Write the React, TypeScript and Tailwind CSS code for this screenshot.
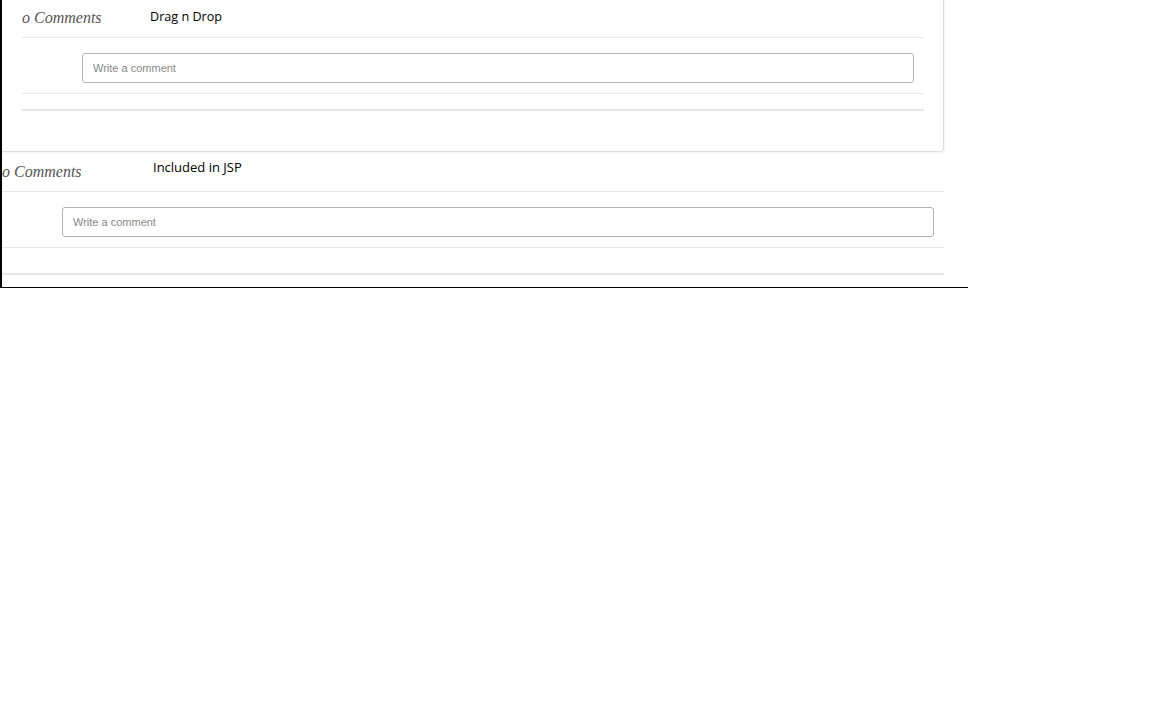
export default function App() {
  return (
    <div className="min-h-screen bg-white">
      <div className="w-[968px] border-l-2 border-b border-black">
        {/* first widget, in a card */}
        <div className="w-[942px] h-[152px] border-r border-b border-[#dcdcdc] rounded-br-[4px] shadow-[1px_1px_1px_rgba(0,0,0,0.04)] pl-5 pr-[19px]">
          <div className="flex items-start h-[37px] pt-[8px]">
            <span className="w-[128px] font-['Liberation_Serif',serif] italic text-[16px] leading-[18px] mt-[1px] text-[#555]">
              o Comments
            </span>
            <span className="mt-[1px] font-['Open_Sans',sans-serif] text-[12.6px] leading-[16px] text-black">
              Drag n Drop
            </span>
          </div>
          <div className="border-t border-[#e8e8e8]" />
          <div className="pl-[60px] pr-[10px] pt-[15px] pb-[10px]">
            <CommentInput />
          </div>
          <div className="border-t border-[#e8e8e8]" />
          <div className="mt-[15px] border-t-2 border-[#e6e6e6]" />
        </div>

        {/* second widget, plain */}
        <div className="w-[942px] pb-[12px]">
          <div className="flex items-start h-[39px] pt-[7px]">
            <span className="w-[151px] font-['Liberation_Serif',serif] italic text-[16px] leading-[18px] mt-[4px] text-[#555]">
              o Comments
            </span>
            <span className="font-['Open_Sans',sans-serif] text-[13px] leading-[16px] text-black">
              Included in JSP
            </span>
          </div>
          <div className="border-t border-[#e8e8e8]" />
          <div className="pl-[60px] pr-[10px] pt-[15px] pb-[10px]">
            <CommentInput />
          </div>
          <div className="border-t border-[#e8e8e8]" />
          <div className="mt-[25px] border-t-2 border-[#e6e6e6]" />
        </div>
      </div>
    </div>
  )
}

function CommentInput() {
  return (
    <input
      type="text"
      placeholder="Write a comment"
      className="block w-full h-[30px] px-[10px] border border-[#b4b4b4] rounded-[3px] bg-white font-['Liberation_Sans',Arial,sans-serif] text-[11px] text-[#333] placeholder:text-[#888] outline-none"
    />
  )
}
